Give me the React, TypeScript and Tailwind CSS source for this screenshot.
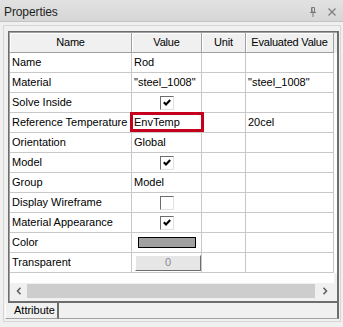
import React from "react";

// Property grid panel (WinForms-ish look)

const COLS = "grid grid-cols-[122px_70px_44px_88px]";
const LINE = "border-[#c8c8c8]";

function Check({ checked }: { checked: boolean }) {
  return (
    <div className="flex h-[14px] w-[14px] items-center justify-center border border-t-[#6d6d6d] border-l-[#6d6d6d] border-r-[#e2e2e2] border-b-[#e2e2e2] bg-white">
      {checked && (
        <svg width="8" height="7" viewBox="0 0 8 7">
          <path d="M0.8 3.2 L3 5.4 L7.2 1" stroke="#000" strokeWidth="2.1" fill="none" />
        </svg>
      )}
    </div>
  );
}

type Row = {
  name: string;
  value?: React.ReactNode;
  evaluated?: string;
  highlight?: boolean;
  center?: boolean;
};

const rows: Row[] = [
  { name: "Name", value: "Rod" },
  { name: "Material", value: '"steel_1008"', evaluated: '"steel_1008"' },
  { name: "Solve Inside", value: <Check checked />, center: true },
  { name: "Reference Temperature", value: "EnvTemp", evaluated: "20cel", highlight: true },
  { name: "Orientation", value: "Global" },
  { name: "Model", value: <Check checked />, center: true },
  { name: "Group", value: "Model" },
  { name: "Display Wireframe", value: <Check checked={false} />, center: true },
  { name: "Material Appearance", value: <Check checked />, center: true },
  {
    name: "Color",
    value: <div className="ml-[6px] h-[11px] w-[58px] border border-black bg-[#a0a0a0]" />,
  },
  {
    name: "Transparent",
    value: (
      <div className="ml-[3px] flex h-[16px] w-[66px] items-center justify-center border border-t-white border-l-white border-r-[#6d6d6d] border-b-[#6d6d6d] bg-[#e6e6e6] text-[#8a8a96]">
        0
      </div>
    ),
  },
];

function HeaderCell({ label }: { label: string }) {
  return (
    <div className="flex items-center justify-center border-r border-b border-[#a0a0a0] bg-[#f0f0f0] tracking-[-0.2px] shadow-[inset_1px_1px_0_#ffffff]">
      {label}
    </div>
  );
}

export default function App() {
  return (
    <div className="h-[327px] w-[343px] overflow-hidden bg-[#f0f0f0] font-['Liberation_Sans',Arial,sans-serif] text-[11px] text-black">
      {/* title bar */}
      <div className="flex h-[22px] items-center justify-between border-b border-[#c4c4c4] bg-gradient-to-b from-[#e2e2e2] to-[#d6d6d6] pl-[4px] pr-[7px] pt-[2px]">
        <span className="text-[12px] tracking-[-0.1px] text-[#1e1e1e]">Properties</span>
        <div className="flex items-center gap-[11px]">
          <svg width="8" height="10" viewBox="0 0 8 10">
            <path d="M2.5 0.5 H5.5 V5 H2.5 Z M1 5.5 H7 M4 5.5 V10" stroke="#7a7a7a" strokeWidth="1" fill="none" />
            <path d="M3 1 V5" stroke="#7a7a7a" strokeWidth="1" />
          </svg>
          <svg width="8" height="8" viewBox="0 0 8 8">
            <path d="M0.5 0.5 L7.5 7.5 M7.5 0.5 L0.5 7.5" stroke="#7a7a7a" strokeWidth="1.1" fill="none" />
          </svg>
        </div>
      </div>

      {/* panel */}
      <div className="ml-[3px] mt-[3px] w-[338px] border border-[#d6d6d6] pb-[2px] pl-[4px] pr-[1px] pt-[5px]">
        {/* grid frame */}
        <div className="w-[331px] border-t border-l border-r-2 border-b-2 border-[#6d6d6d]">
          <div className="border-t border-l border-[#a0a0a0]">
            <div className={`${COLS} h-[20px]`}>
              <HeaderCell label="Name" />
              <HeaderCell label="Value" />
              <HeaderCell label="Unit" />
              <HeaderCell label="Evaluated Value" />
            </div>
            {rows.map((r) => (
              <div key={r.name} className={`${COLS} h-[20px] bg-white`}>
                <div className={`flex items-center border-r border-b ${LINE} pl-[2px]`}>{r.name}</div>
                <div
                  className={`relative flex items-center border-r border-b ${LINE} ${
                    typeof r.value === "string" ? "pl-[2px]" : ""
                  } ${r.center ? "justify-center" : ""}`}
                >
                  {r.value}
                  {r.highlight && (
                    <div className="absolute -left-[2px] -top-[1px] z-10 h-[20px] w-[74px] border-[3px] border-[#c4001c]" />
                  )}
                </div>
                <div className={`border-r border-b ${LINE}`} />
                <div className={`flex items-center border-r border-b ${LINE} pl-[2px]`}>{r.evaluated}</div>
              </div>
            ))}
            <div className="h-[10px] w-[324px] bg-white" />
            {/* horizontal scrollbar */}
            <div className="flex h-[16px] w-[324px] items-center bg-[#f0f0f0]">
              <div className="flex w-[17px] justify-center">
                <svg width="6" height="8" viewBox="0 0 6 8">
                  <path d="M4.5 0.8 L1.5 4 L4.5 7.2" stroke="#606060" strokeWidth="1.6" fill="none" />
                </svg>
              </div>
              <div className="h-[14px] w-[288px] bg-[#cdcdcd]" />
              <div className="flex flex-1 justify-center">
                <svg width="6" height="8" viewBox="0 0 6 8">
                  <path d="M1.5 0.8 L4.5 4 L1.5 7.2" stroke="#606060" strokeWidth="1.6" fill="none" />
                </svg>
              </div>
            </div>
            <div className="h-[2px]" />
          </div>
        </div>

        {/* tab strip */}
        <div className="-ml-[3px] flex h-[16px]">
          <div className="flex w-[54px] items-center border-l border-b border-l-white border-b-[#a0a0a0] border-r-2 border-r-[#6d6d6d] pl-[8px]">
            Attribute
          </div>
          <div className="flex-1 border-r-2 border-b border-r-[#6d6d6d] border-b-[#a0a0a0]" />
        </div>
      </div>
    </div>
  );
}
